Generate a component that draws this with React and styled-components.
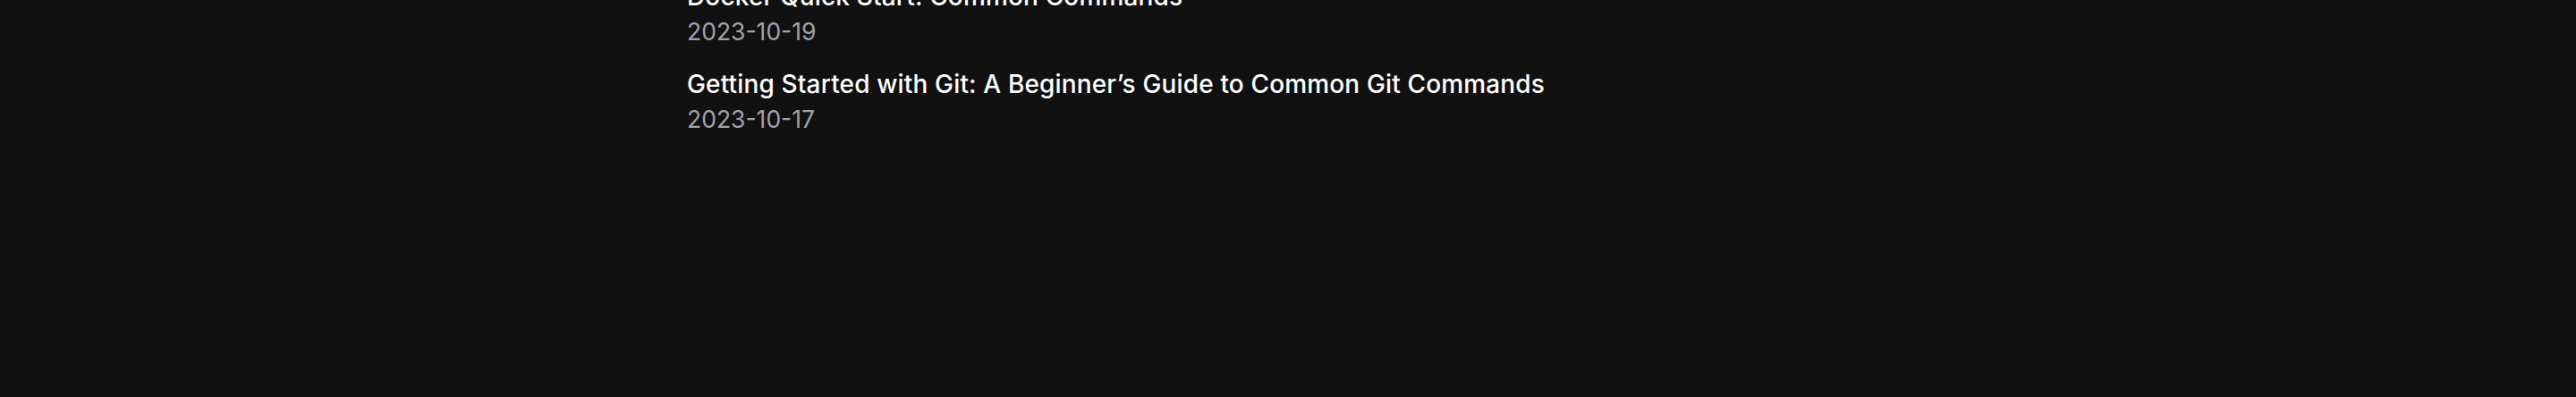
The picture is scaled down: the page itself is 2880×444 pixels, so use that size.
import React from "react";
import styled, { createGlobalStyle } from "styled-components";

const GlobalStyle = createGlobalStyle`
  html, body {
    margin: 0;
    padding: 0;
    background: #111111;
  }
  body {
    font-family: Inter, "Noto Sans", sans-serif;
    color: #ffffff;
    -webkit-font-smoothing: antialiased;
  }
`;

const Page = styled.div`
  min-height: 444px;
  background: #111111;
  overflow: hidden;
`;

const Column = styled.main`
  max-width: 1344px;
  margin: 0 auto;
`;

const PostList = styled.ul`
  list-style: none;
  margin: -23px 0 0;
  padding: 0;
  display: flex;
  flex-direction: column;
  gap: 21px;
`;

const PostItem = styled.li`
  display: flex;
  flex-direction: column;
`;

const PostTitle = styled.a`
  color: #ffffff;
  text-decoration: none;
  font-size: 28px;
  line-height: 39px;
  font-weight: 500;
  letter-spacing: 0.15px;
`;

const PostDate = styled.time`
  color: #a1a1aa;
  font-size: 26.5px;
  line-height: 38px;
  font-weight: 400;
`;

const posts = [
  { title: "Docker Quick Start: Common Commands", date: "2023-10-19" },
  {
    title: "Getting Started with Git: A Beginner’s Guide to Common Git Commands",
    date: "2023-10-17",
  },
];

export default function App() {
  return (
    <Page>
      <GlobalStyle />
      <Column>
        <PostList>
          {posts.map((p) => (
            <PostItem key={p.date}>
              <PostTitle href="#">{p.title}</PostTitle>
              <PostDate dateTime={p.date}>{p.date}</PostDate>
            </PostItem>
          ))}
        </PostList>
      </Column>
    </Page>
  );
}
